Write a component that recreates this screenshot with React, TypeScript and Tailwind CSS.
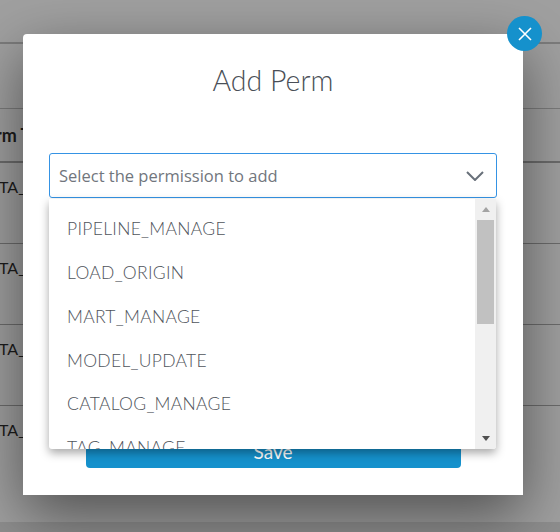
const PERMISSIONS = ['PIPELINE_MANAGE', 'LOAD_ORIGIN', 'MART_MANAGE', 'MODEL_UPDATE', 'CATALOG_MANAGE', 'TAG_MANAGE'];

function BackgroundTable() {
  return (
    <div className="flex h-[532px] flex-col overflow-hidden bg-[#a0a0a0] font-['Lato',sans-serif] text-[16px] text-[#1c1c1c]">
      <div className="h-[44px] shrink-0 border-b-2 border-[#7c7c7c]" />
      <div className="h-[65px] shrink-0 border-b border-[#7c7c7c]" />
      <div className="flex h-[54px] shrink-0 items-center whitespace-nowrap border-b-2 border-[#6c6c6c] text-[18px] font-bold">
        <span className="ml-[-5px]">rm Type</span>
      </div>
      {[0, 1, 2].map((row) => (
        <div className="h-[81px] shrink-0 whitespace-nowrap border-b border-[#6c6c6c] pt-[12px]" key={row}>
          <span className="ml-[-1px]">TA_READ</span>
        </div>
      ))}
      <div className="h-[116px] shrink-0 whitespace-nowrap pt-[12px]">
        <span className="ml-[-1px]">TA_READ</span>
      </div>
      <div className="flex-1 bg-[#8f8f8f]" />
    </div>
  );
}

function ScrollBar() {
  return (
    <div className="flex w-[21px] shrink-0 flex-col items-center bg-[#f0f0f0]">
      <div className="flex h-[21px] w-full items-center justify-center">
        <div className="h-0 w-0 border-x-[4.5px] border-b-[5px] border-x-transparent border-b-[#a3a3a3]" />
      </div>
      <div className="h-[104px] w-[17px] bg-[#c1c1c1]" />
      <div className="flex-1" />
      <div className="flex h-[21px] w-full items-center justify-center">
        <div className="h-0 w-0 border-x-[4.5px] border-t-[5px] border-x-transparent border-t-[#505050]" />
      </div>
    </div>
  );
}

export default function App() {
  return (
    <div className="relative h-[532px] w-[560px] overflow-hidden">
      <BackgroundTable />
      <div className="absolute inset-0 flex items-start justify-center">
        <div className="relative ml-[-14px] mt-[34px] h-[461px] w-[500px] rounded-tl-[4px] bg-white px-[26px] pt-[27px] font-['Lato',sans-serif] shadow-[0_20px_60px_rgba(0,0,0,0.5)]">
          <button className="absolute right-[-19px] top-[-18px] flex h-[35px] w-[35px] items-center justify-center rounded-full bg-[#1591cc] text-white">
            <svg fill="none" height="14" stroke="currentColor" strokeWidth="1.6" viewBox="0 0 14 14" width="14">
              <path d="M1 1l12 12M13 1L1 13" />
            </svg>
          </button>
          <h2 className="text-center text-[28.5px] font-light leading-[38px] text-[#4a4f57]">Add Perm</h2>
          <div className="relative mt-[54px]">
            <div className="flex h-[45px] items-center justify-between rounded-[3px] border border-[#3593e4] pl-[9px] pr-[12px] font-['Open_Sans',sans-serif] text-[16.5px] text-[#71767d]">
              <span className="pt-[1px]">Select the permission to add</span>
              <svg fill="none" height="10" stroke="#68707a" strokeWidth="2" viewBox="0 0 18 10" width="18">
                <path d="M1 1l8 8 8-8" />
              </svg>
            </div>
            <div className="absolute left-0 right-[1px] top-[46px] z-10 flex h-[250px] overflow-hidden rounded-b-[3px] bg-white shadow-[0_4px_10px_rgba(0,0,0,0.35)]">
              <ul className="flex-1 overflow-hidden pl-[18px] pt-[8.5px] text-[17.5px] font-light tracking-[0.3px] text-[#4f545b]">
                {PERMISSIONS.map((name) => (
                  <li className="flex h-[43.8px] items-center whitespace-nowrap" key={name}>{name}</li>
                ))}
              </ul>
              <ScrollBar />
            </div>
            <button className="mx-auto mt-[230px] block h-[40px] w-[375px] rounded-[4px] bg-[#1591cc] pt-[8px] text-[19px] leading-[32px] text-white">
              Save
            </button>
          </div>
        </div>
      </div>
    </div>
  );
}
